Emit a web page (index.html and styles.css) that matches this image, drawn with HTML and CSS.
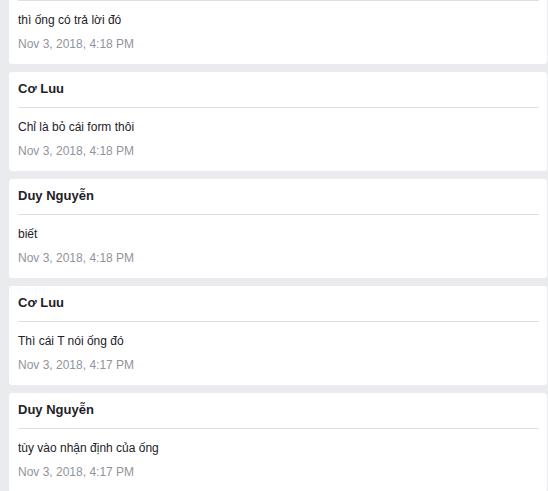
FILE: index.html
```html
<!DOCTYPE html>
<html lang="vi">
<head>
<meta charset="utf-8">
<link rel="stylesheet" href="styles.css">
</head>
<body>
<div class="list">
  <div class="card">
    <div class="rule"></div>
    <div class="msg">thì ống có trả lời đó</div>
    <div class="date">Nov 3, 2018, 4:18 PM</div>
  </div>
  <div class="card">
    <div class="name">Cơ Luu</div>
    <div class="rule"></div>
    <div class="msg">Chỉ là bỏ cái form thôi</div>
    <div class="date">Nov 3, 2018, 4:18 PM</div>
  </div>
  <div class="card">
    <div class="name">Duy Nguyễn</div>
    <div class="rule"></div>
    <div class="msg">biết</div>
    <div class="date">Nov 3, 2018, 4:18 PM</div>
  </div>
  <div class="card">
    <div class="name">Cơ Luu</div>
    <div class="rule"></div>
    <div class="msg">Thì cái T nói ống đó</div>
    <div class="date">Nov 3, 2018, 4:17 PM</div>
  </div>
  <div class="card">
    <div class="name">Duy Nguyễn</div>
    <div class="rule"></div>
    <div class="msg">tùy vào nhận định của ống</div>
    <div class="date">Nov 3, 2018, 4:17 PM</div>
  </div>
</div>
</body>
</html>
```
FILE: styles.css
```css
html, body {
  margin: 0;
  padding: 0;
  background: #e9ebee;
  overflow: hidden;
  height: 491px;
}
body {
  font-family: "Liberation Sans", Arial, sans-serif;
  color: #1d2129;
}
.list {
  margin-top: -8px;
  padding-left: 9px;
  padding-right: 1px;
}
.card {
  background: #fff;
  border-radius: 3px;
  padding: 8px 8px 10.5px 9px;
  margin-bottom: 8.5px;
}
.name {
  font-weight: bold;
  font-size: 13px;
  line-height: 18px;
  margin-bottom: 9px;
}
.rule {
  height: 1px;
  background: #dddfe2;
}
.msg {
  font-size: 12px;
  line-height: 18px;
  margin-top: 10px;
}
.date {
  font-size: 12px;
  line-height: 18px;
  margin-top: 6px;
  color: #90949c;
}
```
